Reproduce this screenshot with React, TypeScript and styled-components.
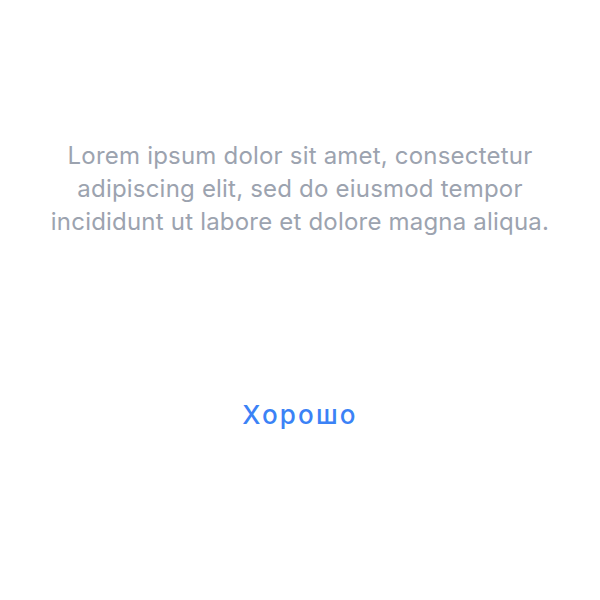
import styled, { createGlobalStyle } from "styled-components";

const Global = createGlobalStyle`
  html, body {
    margin: 0;
    padding: 0;
    background: #fff;
  }
  body {
    font-family: Inter, "Noto Sans", sans-serif;
  }
`;

const Wrap = styled.div`
  width: 600px;
  height: 600px;
  display: flex;
  flex-direction: column;
  align-items: center;
  box-sizing: border-box;
  padding: 139px 20px 0;
  .message {
    margin: 0;
    font-size: 24px;
    line-height: 33px;
    letter-spacing: 0.2px;
    color: #9ca3af;
    text-align: center;
  }
  .action {
    margin-top: 162px;
    border: none;
    background: none;
    padding: 0;
    font-family: inherit;
    font-size: 26px;
    font-weight: 500;
    line-height: 30px;
    letter-spacing: 2.2px;
    color: #3b82f6;
    cursor: pointer;
  }
`;

export default () => {
  return (
    <Wrap>
      <Global />
      <p className="message">
        Lorem ipsum dolor sit amet, consectetur
        <br />
        adipiscing elit, sed do eiusmod tempor
        <br />
        incididunt ut labore et dolore magna aliqua.
      </p>
      <button className="action">Хорошо</button>
    </Wrap>
  );
};
